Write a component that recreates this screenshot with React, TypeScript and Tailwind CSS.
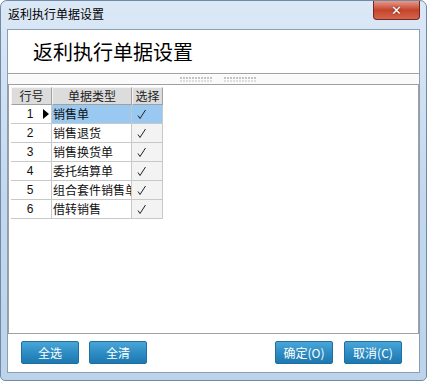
import React from "react";

const rows = [
  { n: 1, t: "销售单" },
  { n: 2, t: "销售退货" },
  { n: 3, t: "销售换货单" },
  { n: 4, t: "委托结算单" },
  { n: 5, t: "组合套件销售单" },
  { n: 6, t: "借转销售" },
];

const cjk = { fontFamily: '"Noto Sans CJK SC", "Noto Sans", sans-serif' };

function Check() {
  return (
    <svg width="10" height="11" viewBox="0 0 10 11" className="block">
      <path d="M1 6.5 L3 9.5 L8.5 1" fill="none" stroke="#222" strokeWidth="1" />
    </svg>
  );
}

function Grip() {
  return (
    <div className="flex gap-[12px]">
      {[0, 1].map((g) => (
        <div key={g} className="flex gap-[1px]">
          {Array.from({ length: 11 }).map((_, i) => (
            <div key={i} className="flex flex-col gap-[1px]">
              <div className="w-[2px] h-[2px] bg-[#c4c4c4]" />
              <div className="w-[2px] h-[2px] bg-[#dedede]" />
            </div>
          ))}
        </div>
      ))}
    </div>
  );
}

function Btn({ children, className = "" }: { children: React.ReactNode; className?: string }) {
  return (
    <div
      className={
        "w-[58px] h-[23px] rounded-[2px] border border-[#1f6fa0] bg-gradient-to-b from-[#4aa6d8] via-[#2d8dc4] to-[#1e78b0] text-white text-[12px] flex items-center justify-center " +
        className
      }
    >
      {children}
    </div>
  );
}

export default function App() {
  return (
    <div
      className="w-[427px] h-[381px] rounded-t-[7px] rounded-b-[5px] overflow-hidden flex flex-col bg-gradient-to-b from-[#dbe8f6] via-[#c3d8ee] to-[#bcd3ea] border border-[#6f8aa8]"
      style={cjk}
    >
      {/* title bar */}
      <div className="h-[28px] flex items-start shrink-0">
        <div className="pl-[7px] pt-[5px] text-[12px] text-black leading-[16px]">返利执行单据设置</div>
        <div className="ml-auto mr-[6px] w-[47px] h-[19px] rounded-b-[4px] border border-t-0 border-[#6e2a20] bg-gradient-to-b from-[#e49a88] via-[#c5432c] to-[#d4654c] flex items-center justify-center">
          <span className="text-white font-bold text-[13px] leading-none" style={{ fontFamily: '"DejaVu Sans", sans-serif', textShadow: "0 0 2px #4a140c" }}>✕</span>
        </div>
      </div>
      {/* client */}
      <div className="flex-1 mx-[6px] mb-[7px] bg-white border border-[#8a9eb6] flex flex-col">
        {/* header */}
        <div className="h-[43px] flex items-center pl-[25px] shrink-0">
          <span className="text-[20px] text-black leading-none">返利执行单据设置</span>
        </div>
        <div className="h-[1px] bg-[#a0a0a0] shrink-0" />
        <div className="h-[1px] bg-white shrink-0" />
        {/* splitter */}
        <div className="h-[9px] flex items-center justify-center bg-[#fafafa] shrink-0 pl-[8px]">
          <Grip />
        </div>
        {/* grid panel */}
        <div className="h-[250px] border border-[#a0a0a0] bg-white shrink-0 pl-[2px] pt-[2px]">
          <div className="flex flex-col w-[152px]" style={cjk}>
            <div className="flex h-[18px] text-[12px] text-[#222]">
              <div className="w-[41px] bg-[#dcdcdc] border border-[#f4f4f4] border-r-[#a0a0a0] border-b-[#a0a0a0] flex items-center justify-center">行号</div>
              <div className="w-[80px] bg-[#dcdcdc] border border-[#f4f4f4] border-r-[#a0a0a0] border-b-[#a0a0a0] flex items-center justify-center">单据类型</div>
              <div className="w-[31px] bg-[#dcdcdc] border border-[#f4f4f4] border-r-[#a0a0a0] border-b-[#a0a0a0] flex items-center justify-center">选择</div>
            </div>
            {rows.map((r, i) => (
              <div key={r.n} className="flex h-[19px] text-[12px] text-[#111]">
                <div className="w-[41px] relative bg-white border-r border-b border-[#c8c8c8] flex items-center justify-center pr-[2px]" style={{ fontFamily: '"Liberation Sans", sans-serif' }}>
                  {r.n}
                  {i === 0 && (
                    <svg className="absolute right-[2px] top-[4px]" width="6" height="10" viewBox="0 0 6 10">
                      <path d="M0 0 L6 5 L0 10 Z" fill="#000" />
                    </svg>
                  )}
                </div>
                <div className={"w-[80px] border-r border-b border-[#c8c8c8] flex items-center pl-[1px] overflow-hidden whitespace-nowrap " + (i === 0 ? "bg-[#99c9f0]" : "bg-white")}>
                  {r.t}
                </div>
                <div className={"w-[31px] border-r border-b border-[#c8c8c8] flex items-center pl-[5px] " + (i === 0 ? "bg-[#99c9f0]" : "bg-[#f3f3f3]")}>
                  <Check />
                </div>
              </div>
            ))}
          </div>
        </div>
        {/* buttons */}
        <div className="flex-1 flex items-start pt-[7px] pl-[13px] pr-[17px]">
          <Btn>全选</Btn>
          <Btn className="ml-[10px]">全清</Btn>
          <Btn className="ml-auto">确定(O)</Btn>
          <Btn className="ml-[11px]">取消(C)</Btn>
        </div>
      </div>
    </div>
  );
}
